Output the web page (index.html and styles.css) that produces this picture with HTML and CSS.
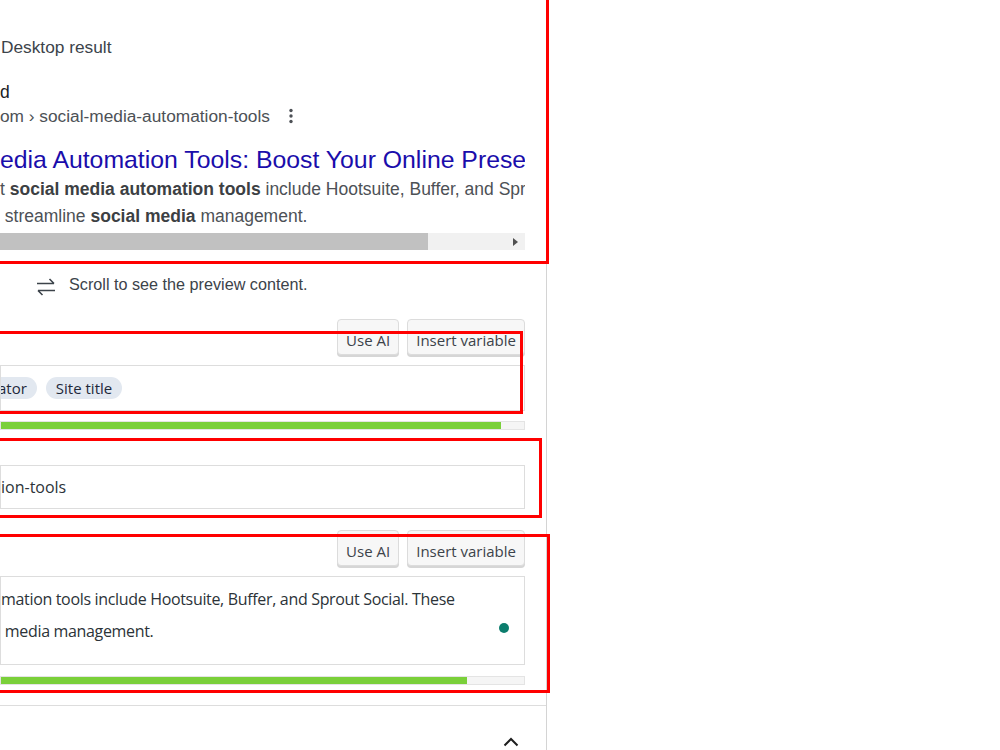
FILE: index.html
```html
<!DOCTYPE html>
<html lang="en">
<head>
    <meta charset="UTF-8">
    <meta name="viewport" content="width=device-width, initial-scale=1.0">
    <title>Search appearance</title>
    <link rel="stylesheet" href="styles.css">
</head>
<body>
    <div class="panel">
        <!-- Google preview -->
        <div class="preview">
            <div class="mode-label">Desktop result</div>
            <div class="serp">
                <div class="site-name">d</div>
                <div class="site-url">
                    <span>om › social-media-automation-tools</span>
                    <svg class="dots" width="4" height="16" viewBox="0 0 4 16">
                        <circle cx="2" cy="2.5" r="1.7"/>
                        <circle cx="2" cy="8" r="1.7"/>
                        <circle cx="2" cy="13.5" r="1.7"/>
                    </svg>
                </div>
                <div class="serp-title">edia Automation Tools: Boost Your Online Presence</div>
                <div class="serp-desc">t <b>social media automation tools</b> include Hootsuite, Buffer, and Sprout Social. These</div>
                <div class="serp-desc">&nbsp;streamline <b>social media</b> management.</div>
            </div>
            <div class="scrollbar">
                <div class="scroll-thumb"></div>
                <span class="scroll-arrow"></span>
            </div>
        </div>

        <div class="scroll-hint">
            <svg class="hint-icon" width="20" height="20" viewBox="0 0 20 20" fill="none" stroke="#3c434a" stroke-width="1.6">
                <path d="M1 6.5h17M13.5 2l4.5 4.5"/>
                <path d="M19 13.5H2M6.5 18L2 13.5"/>
            </svg>
            <span>Scroll to see the preview content.</span>
        </div>

        <!-- SEO title -->
        <div class="field field-title">
            <div class="field-head">
                <button class="var-btn">Use AI</button>
                <button class="var-btn">Insert variable</button>
            </div>
            <div class="input input-title">
                <span class="chip chip-cut">ator</span>
                <span class="chip">Site title</span>
            </div>
            <div class="progress"><div class="progress-fill" style="width: 500px;"></div></div>
        </div>

        <!-- Slug -->
        <div class="field field-slug">
            <div class="input input-slug">ion-tools</div>
        </div>

        <!-- Meta description -->
        <div class="field field-desc">
            <div class="field-head">
                <button class="var-btn">Use AI</button>
                <button class="var-btn">Insert variable</button>
            </div>
            <div class="input input-desc">
                <div class="desc-line">mation tools include Hootsuite, Buffer, and Sprout Social. These</div>
                <div class="desc-line">&nbsp;media management.</div>
                <span class="status-dot"></span>
            </div>
            <div class="progress"><div class="progress-fill" style="width: 466px;"></div></div>
        </div>

        <div class="collapse-row">
            <svg class="chevron" width="16" height="10" viewBox="0 0 16 10" fill="none" stroke="#1e1e1e" stroke-width="2">
                <path d="M1.5 8.5L8 2l6.5 6.5"/>
            </svg>
        </div>

        <!-- review markers -->
        <div class="mark mark-preview"></div>
        <div class="mark mark-title"></div>
        <div class="mark mark-slug"></div>
        <div class="mark mark-desc"></div>
    </div>
</body>
</html>
```

FILE: styles.css
```css
body {
    margin: 0;
    background: #fff;
    font-family: "Open Sans", "Liberation Sans", sans-serif;
    color: #1e1e1e;
    overflow: hidden;
}
.panel {
    position: relative;
    width: 546px;
    height: 750px;
    border-right: 1px solid #d4d4d4;
}
.preview {
    width: 525px;
    font-family: "Liberation Sans", Arial, sans-serif;
}
.mode-label {
    padding-top: 36px;
    font-size: 17.3px;
    line-height: 22px;
    color: #3c434a;
    padding-left: 1px;
}
.serp {
    margin-top: 22px;
    overflow: hidden;
}
.site-name {
    font-size: 17.5px;
    line-height: 24px;
    color: #202124;
}
.site-url {
    display: flex;
    align-items: center;
    font-size: 17.3px;
    line-height: 24px;
    color: #4d5156;
}
.dots {
    margin-left: 19px;
    fill: #4d5156;
}
.serp-title {
    margin-top: 16px;
    font-size: 24.8px;
    line-height: 32px;
    color: #1a0dab;
    white-space: nowrap;
}
.serp-desc {
    font-size: 17.5px;
    line-height: 27px;
    color: #4d5156;
    white-space: nowrap;
}
.serp-desc b {
    color: #3c4043;
}
.scrollbar {
    position: relative;
    margin-top: 3px;
    height: 17px;
    background: #f1f1f1;
}
.scroll-thumb {
    width: 428px;
    height: 100%;
    background: #c1c1c1;
}
.scroll-arrow {
    position: absolute;
    right: 7px;
    top: 5px;
    border-left: 5px solid #505050;
    border-top: 4px solid transparent;
    border-bottom: 4px solid transparent;
}
.scroll-hint {
    display: flex;
    align-items: center;
    margin-top: 24px;
    padding-left: 36px;
    height: 20px;
    font-family: "Liberation Sans", Arial, sans-serif;
    font-size: 16.2px;
    color: #3c434a;
}
.hint-icon {
    margin-right: 13px;
    margin-top: 5px;
}
.field {
    width: 525px;
}
.field-title {
    margin-top: 25px;
}
.field-head {
    display: flex;
    justify-content: flex-end;
    gap: 8px;
}
.var-btn {
    box-sizing: border-box;
    height: 36px;
    padding: 5px 8px 0;
    background: #f7f7f7;
    border: 1px solid #dcdcdc;
    border-radius: 4px;
    box-shadow: 0 2px 0 #d6d6d6;
    font-family: "Open Sans", sans-serif;
    font-size: 15px;
    color: #3c434a;
    margin-bottom: 2px;
}
.input {
    box-sizing: border-box;
    margin-top: 8px;
    border: 1px solid #dddddd;
    background: #fff;
    white-space: nowrap;
    overflow: hidden;
}
.input-title {
    display: flex;
    align-items: center;
    gap: 9px;
    height: 46px;
}
.chip {
    height: 22px;
    line-height: 22px;
    padding: 0 10px;
    border-radius: 11px;
    background: #e2e8f0;
    color: #1e293b;
    font-size: 15px;
    font-weight: 500;
}
.chip-cut {
    margin-left: -13px;
}
.progress {
    box-sizing: border-box;
    margin-top: 10px;
    height: 9px;
    background: #f5f5f5;
    border: 1px solid #e4e4e4;
}
.progress-fill {
    height: 7px;
    background: #7ad03a;
}
.field-slug {
    margin-top: 35px;
}
.input-slug {
    height: 44px;
    line-height: 42px;
    font-size: 16px;
    color: #2c3338;
}
.field-desc {
    margin-top: 21px;
}
.input-desc {
    position: relative;
    height: 89px;
    padding-top: 6px;
    font-size: 16px;
    letter-spacing: -0.33px;
    color: #2c3338;
}
.desc-line {
    line-height: 32px;
}
.status-dot {
    position: absolute;
    right: 15px;
    top: 46px;
    width: 10px;
    height: 10px;
    border-radius: 50%;
    background: #0b7d6d;
}
.field-desc .progress {
    margin-top: 11px;
}
.collapse-row {
    margin-top: 20px;
    border-top: 1px solid #dddddd;
    height: 44px;
    display: flex;
    justify-content: flex-end;
    align-items: flex-end;
    padding-right: 27px;
}
.chevron {
    margin-bottom: 3px;
}
.mark {
    position: absolute;
    border: 3px solid #ff0000;
    border-left: none;
    left: 0;
}
.mark-preview {
    top: -10px;
    width: 546px;
    height: 268px;
}
.mark-title {
    top: 331px;
    width: 520px;
    height: 77px;
}
.mark-slug {
    top: 438px;
    width: 539px;
    height: 74px;
}
.mark-desc {
    top: 534px;
    width: 547px;
    height: 153px;
}
```
